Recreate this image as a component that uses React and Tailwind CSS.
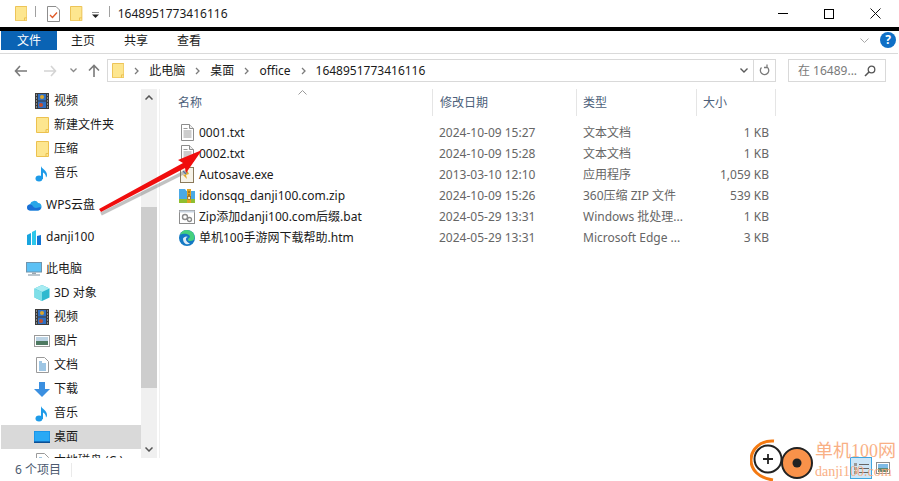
const F = '[font-family:"Noto_Sans","Noto_Sans_CJK_SC",sans-serif]';

function Folder({ s = 1 }) {
  return (
    <svg width={13 * s} height={16 * s} viewBox="0 0 13 16" className="shrink-0">
      <path d="M.5.5h12v15H.5z" fill="#fde68f" stroke="#ecc14f" />
      <path d="M10 15.5v-3h2.5" fill="none" stroke="#ecc14f" />
    </svg>
  );
}
function Film() {
  return (
    <svg width="14" height="16" viewBox="0 0 14 16" className="shrink-0">
      <rect width="14" height="16" fill="#3b3b3b" />
      <rect x="3" y="1" width="8" height="6.5" fill="#2f6fc2" />
      <rect x="3" y="8.5" width="8" height="6.5" fill="#2f6fc2" />
      <circle cx="7" cy="4" r="2" fill="#d9a62e" />
      <circle cx="6" cy="12" r="2" fill="#c44f2d" />
      <path d="M1 2h1M1 5h1M1 8h1M1 11h1M1 14h1M12 2h1M12 5h1M12 8h1M12 11h1M12 14h1" stroke="#ddd" />
    </svg>
  );
}
function Note() {
  return (
    <svg width="14" height="17" viewBox="0 0 14 17" className="shrink-0">
      <ellipse cx="4" cy="13.5" rx="3.5" ry="3" fill="#1e9be8" />
      <path d="M6 14V1c.5 3 6 4 6 9 0 1-.5 2-1 2.500 0-3-2-4.500-3-5V14z" fill="#1e9be8" />
    </svg>
  );
}
function Doc() {
  return (
    <svg width="15" height="17" viewBox="0 0 15 17" className="shrink-0">
      <path d="M1.500.5h8l4 4v12h-12z" fill="#fff" stroke="#8d8d8d" />
      <path d="M9.500.5v4h4" fill="#eee" stroke="#8d8d8d" />
      <path d="M3.500 4.500h4M3.500 7h8M3.500 9h8M3.500 11h8M3.500 13h8" stroke="#9a9a9a" />
    </svg>
  );
}
function Chevron() {
  return (
    <svg width="5" height="8" viewBox="0 0 5 8" className="shrink-0 mx-[10px]">
      <path d="M1 1l3 3-3 3" fill="none" stroke="#7b7b7b" strokeWidth="1.300" />
    </svg>
  );
}

const navIcons = {
  film: <Film />,
  folder: <Folder s={1} />,
  note: <Note />,
  cube: (
    <svg width="16" height="16" viewBox="0 0 16 16" className="shrink-0">
      <path d="M8 0l7.500 3.500v9L8 16 .5 12.500v-9z" fill="#2fb9cf" />
      <path d="M8 0l7.500 3.500L8 7 .5 3.500z" fill="#a8ecf2" />
      <path d="M8 7v9L.5 12.500v-9z" fill="#7fdfe8" />
    </svg>
  ),
  pic: (
    <svg width="16" height="13" viewBox="0 0 16 13" className="shrink-0">
      <rect x=".5" y=".5" width="15" height="11" fill="#fff" stroke="#9a9a9a" />
      <rect x="2" y="2" width="12" height="4" fill="#bcd3e4" />
      <rect x="2" y="6" width="12" height="4" fill="#4e7a62" />
    </svg>
  ),
  text: (
    <svg width="13" height="16" viewBox="0 0 13 16" className="shrink-0">
      <path d="M.5.500h8l4 4v11H.5z" fill="#fff" stroke="#9a9a9a" />
      <path d="M3 5h3M3 7h7M3 9h7M3 11h7M3 13h7" stroke="#3f8dc9" />
    </svg>
  ),
  down: (
    <svg width="16" height="15" viewBox="0 0 16 15" className="shrink-0">
      <path d="M5 0h6v7h5l-8 8-8-8h5z" fill="#3b8fe0" />
    </svg>
  ),
  desk: (
    <svg width="16" height="12" viewBox="0 0 16 12" className="shrink-0">
      <rect width="16" height="12" fill="#1790e6" />
      <rect x=".8" y=".8" width="14.400" height="9.500" fill="#29a9f5" />
      <rect x="0" y="10.500" width="16" height="1.500" fill="#0d4f93" />
    </svg>
  ),
  cloud: (
    <svg width="15" height="12" viewBox="0 0 15 12" className="shrink-0">
      <path d="M3.500 11.500a3.200 3.200 0 0 1-.5-6.300A4.500 4.500 0 0 1 11.200 4a3.800 3.800 0 0 1 .3 7.500z" fill="#29a6e8" />
      <path d="M3 11.500a3 3 0 0 1 0-6c3 0 3 3.500 6 3.500 2 0 4-1 5-.500-.5 2-1.500 3-3.500 3z" fill="#1a6fd6" />
    </svg>
  ),
  bars: (
    <svg width="14" height="15" viewBox="0 0 14 15" className="shrink-0">
      <path d="M0 5l4-2v12H0z" fill="#18a5df" />
      <path d="M5 15V2l4-2v15z" fill="#2dc7ea" />
      <path d="M10 15V6l4-1v10z" fill="#1075d6" />
    </svg>
  ),
  pc: (
    <svg width="16" height="14" viewBox="0 0 16 14" className="shrink-0">
      <rect x=".5" y=".5" width="15" height="9.500" fill="#5cc1f5" stroke="#6f94ad" />
      <path d="M6 10.500h4v1.500H6z" fill="#9aa7b0" />
      <path d="M2 13h12" stroke="#8ea0ad" strokeWidth="1.200" />
    </svg>
  ),
};

function NavRow({ icon, label, indent = "pl-[33px]", gap = "w-[20px]", selected, className = "" }) {
  return (
    <div className={`h-6 flex items-center shrink-0 ${indent} ${selected ? "bg-[#d9d9d9]" : ""} ${className}`}>
      <span className={`${gap} flex justify-center -ml-[2px] mr-[2px] shrink-0`}>{navIcons[icon]}</span>
      <span className="whitespace-nowrap text-[#1a1a1a]">{label}</span>
    </div>
  );
}

const fileIcons = [
  <Doc />,
  <Doc />,
  <svg width="16" height="16" viewBox="0 0 16 16">
    <rect x="1.500" y=".5" width="13" height="15" fill="#f7f3e8" stroke="#8a7a5c" />
    <path d="M8 3l2 4-3 1 1 4-4-4 3-1z" fill="#e0a92c" />
    <path d="M4 4l3 3" stroke="#4b7fc2" strokeWidth="1.300" />
  </svg>,
  <svg width="16" height="16" viewBox="0 0 16 16">
    <path d="M0 1h6l1.500 2H16v9H0z" fill="#4aa9e6" />
    <rect y="11" width="16" height="4" fill="#8fbf30" />
    <rect x="8" y="1" width="4" height="14" fill="#e0a322" />
    <path d="M10 3v2M10 6v2" stroke="#7a4c10" />
    <rect x="8.800" y="8.500" width="2.500" height="3" fill="#fff2c0" stroke="#7a4c10" strokeWidth=".6" />
  </svg>,
  <svg width="16" height="14" viewBox="0 0 16 14">
    <rect x=".5" y=".5" width="15" height="13" fill="#fff" stroke="#8d8d8d" />
    <rect x=".5" y=".5" width="15" height="2" fill="#c9d4e0" />
    <circle cx="6" cy="7" r="2.500" fill="none" stroke="#8a8a8a" strokeWidth="1.400" />
    <circle cx="10.500" cy="9.500" r="2" fill="none" stroke="#8a8a8a" strokeWidth="1.300" />
  </svg>,
  <svg width="16" height="16" viewBox="0 0 16 16">
    <circle cx="8" cy="8" r="8" fill="#1479c4" />
    <path d="M1 5a7.500 7.500 0 0 1 14.500 2c.5 3-2 4-4 4-1.500 0-2.500-.5-2.500-1.500C9 8 12 8 10.500 5.500 8.500 3 3 3.500 1 5z" fill="#45d07d" />
    <path d="M4 8.500a3.500 3.500 0 0 1 5-1.500c-3 0-3 5 2 6.500-3 2-7 0-7-5z" fill="#fff" fillOpacity=".85" />
  </svg>,
];

const files = [
  ["0001.txt", "2024-10-09 15:27", "文本文档", "1 KB"],
  ["0002.txt", "2024-10-09 15:28", "文本文档", "1 KB"],
  ["Autosave.exe", "2013-03-10 12:10", "应用程序", "1,059 KB"],
  ["idonsqq_danji100.com.zip", "2024-10-09 15:26", "360压缩 ZIP 文件", "539 KB"],
  ["Zip添加danji100.com后缀.bat", "2024-05-29 13:31", "Windows 批处理...", "1 KB"],
  ["单机100手游网下载帮助.htm", "2024-05-29 13:31", "Microsoft Edge ...", "3 KB"],
];

export default function App() {
  return (
    <div className={`relative w-[899px] h-[481px] overflow-hidden bg-white text-[12px] leading-none flex flex-col ${F}`}>
      {/* Title bar */}
      <div className="h-[27px] flex items-center shrink-0 pl-[15px]">
        <Folder s={0.95} />
        <div className="w-px h-[11px] bg-[#a0a0a0] ml-[8px] mb-[4px]" />
        <svg width="13" height="16" viewBox="0 0 13 16" className="ml-[11px]">
          <path d="M.5.5h8.500l3.500 3.500v11.500H.5z" fill="#fff" stroke="#8d8d8d" />
          <path d="M3 9l2.500 2.500L10 6.500" fill="none" stroke="#e05a28" strokeWidth="1.300" />
        </svg>
        <div className="ml-[10px]"><Folder s={0.95} /></div>
        <svg width="7" height="6" viewBox="0 0 7 6" className="ml-[9px] mt-[2px]">
          <path d="M0 0h7" stroke="#222" />
          <path d="M0 2.500h7L3.500 6z" fill="#222" />
        </svg>
        <div className="w-px h-[11px] bg-[#a0a0a0] ml-[10px] mb-[4px]" />
        <span className="ml-[8px] text-[12px] text-[#1a1a1a]">1648951773416116</span>
        <div className="ml-auto flex items-center">
          <div className="w-[46px] flex justify-center"><div className="w-[10px] h-px bg-black" /></div>
          <div className="w-[46px] flex justify-center"><div className="w-[10px] h-[10px] border border-black" /></div>
          <div className="w-[46px] flex justify-center mr-[1px]">
            <svg width="11" height="11" viewBox="0 0 11 11"><path d="M.5.500l10 10M10.500.500l-10 10" stroke="#111" /></svg>
          </div>
        </div>
      </div>
      <div className="h-1 bg-black shrink-0" />
      {/* Ribbon */}
      <div className="h-[22px] flex shrink-0 pl-px border-b-0">
        <div className="w-[56px] h-[19px] bg-[#0a63b4] text-white flex items-center justify-center">文件</div>
        <div className="w-[52px] h-[19px] flex items-center justify-center text-[#1a1a1a]">主页</div>
        <div className="w-[54px] h-[19px] flex items-center justify-center text-[#1a1a1a]">共享</div>
        <div className="w-[52px] h-[19px] flex items-center justify-center text-[#1a1a1a]">查看</div>
        <div className="ml-auto flex items-start pr-[3px] pt-[1px] gap-[11px]">
          <svg width="9" height="6" viewBox="0 0 9 6" className="mt-[6px]"><path d="M.5.500l4 4 4-4" fill="none" stroke="#a8a8a8" /></svg>
          <div className="w-4 h-4 rounded-full bg-[#0f6fc6] text-white font-bold text-[12px] flex items-center justify-center">?</div>
        </div>
      </div>
      <div className="h-px bg-[#dadada] shrink-0 mr-[1px]" />
      {/* Address row */}
      <div className="h-[35px] flex items-start shrink-0 pt-[5px]">
        <div className="flex items-center h-[23px] pl-[14px] w-[107px] shrink-0">
          <svg width="13" height="12" viewBox="0 0 13 12"><path d="M6 1L1.500 6 6 11M1.500 6H13" fill="none" stroke="#7a7a7a" strokeWidth="1.600" /></svg>
          <svg width="13" height="12" viewBox="0 0 13 12" className="ml-[17px]"><path d="M7 1l4.500 5L7 11M11.500 6H0" fill="none" stroke="#d4d4d4" strokeWidth="1.600" /></svg>
          <svg width="7" height="5" viewBox="0 0 7 5" className="ml-[13px]"><path d="M.5.500L3.500 3.500 6.500.5" fill="none" stroke="#8a8a8a" strokeWidth="1.300" /></svg>
          <svg width="12" height="13" viewBox="0 0 12 13" className="ml-[11px]"><path d="M1 6.500L6 1.500l5 5M6 1.500V13" fill="none" stroke="#7a7a7a" strokeWidth="1.600" /></svg>
        </div>
        <div className="w-[669px] h-[23px] border border-[#d9d9d9] flex items-center pl-[4px] shrink-0">
          <Folder s={0.95} />
          <Chevron /><span className="text-[#1a1a1a]">此电脑</span>
          <Chevron /><span className="text-[#1a1a1a]">桌面</span>
          <Chevron /><span className="text-[#1a1a1a]">office</span>
          <Chevron /><span className="text-[#1a1a1a]">1648951773416116</span>
          <div className="ml-auto flex items-center h-full">
            <svg width="8" height="5" viewBox="0 0 8 5" className="mr-[5px]"><path d="M.5.500l3.500 3.500L7.500.5" fill="none" stroke="#5a5a5a" strokeWidth="1.400" /></svg>
            <div className="w-px h-full bg-[#d9d9d9]" />
            <svg width="11" height="13" viewBox="0 0 11 13" className="mx-[5px]"><path d="M2.500 3.500a4.200 4.200 0 1 0 5.500-.5M8 .5v3H5" fill="none" stroke="#7a7a7a" strokeWidth="1.300" /></svg>
          </div>
        </div>
        <div className="ml-[12px] w-[98px] h-[23px] border border-[#d9d9d9] flex items-center pl-[9px] text-[#7a7a7a] shrink-0">
          <span>在 16489...</span>
          <svg width="12" height="12" viewBox="0 0 12 12" className="ml-auto mr-[9px]"><circle cx="7.500" cy="4.500" r="3.300" fill="none" stroke="#555" strokeWidth="1.300" /><path d="M5 7l-4 4" stroke="#555" strokeWidth="1.600" /></svg>
        </div>
      </div>
      {/* Body */}
      <div className="flex flex-1 min-h-0">
        <div className="w-[141px] pl-px overflow-hidden shrink-0 pt-0 flex flex-col h-[369px]">
          <NavRow icon="film" label="视频" />
          <NavRow icon="folder" label="新建文件夹" />
          <NavRow icon="folder" label="压缩" />
          <NavRow icon="note" label="音乐" />
          <NavRow icon="cloud" label="WPS云盘" indent="pl-[25px]" className="mt-2" />
          <NavRow icon="bars" label="danji100" indent="pl-[25px]" className="mt-2" />
          <NavRow icon="pc" label="此电脑" indent="pl-[25px]" className="mt-2" />
          <NavRow icon="cube" label="3D 对象" />
          <NavRow icon="film" label="视频" />
          <NavRow icon="pic" label="图片" />
          <NavRow icon="text" label="文档" />
          <NavRow icon="down" label="下载" />
          <NavRow icon="note" label="音乐" />
          <NavRow icon="desk" label="桌面" selected />
          <NavRow icon="text" label="本地磁盘 (C:)" />
        </div>
        {/* Scrollbar */}
        <div className="w-[16px] h-[369px] bg-[#f0f0f0] flex flex-col shrink-0 ml-[0px]">
          <div className="h-[17px] flex items-center justify-center shrink-0">
            <svg width="8" height="5" viewBox="0 0 8 5"><path d="M.5 4.500L4 1l3.500 3.500" fill="none" stroke="#555" strokeWidth="1.500" /></svg>
          </div>
          <div className="h-[101px] shrink-0" />
          <div className="h-[181px] bg-[#cdcdcd] shrink-0" />
          <div className="flex-1" />
          <div className="h-[17px] flex items-center justify-center shrink-0">
            <svg width="8" height="5" viewBox="0 0 8 5"><path d="M.5.500L4 4l3.500-3.500" fill="none" stroke="#555" strokeWidth="1.500" /></svg>
          </div>
        </div>
        <div className="w-px h-[369px] bg-[#f0f0f0] ml-[2px] shrink-0" />
        {/* Files */}
        <div className="flex-1 min-w-0 pl-[11px] flex flex-col relative">
          <div className="h-[27px] flex items-center text-[#4c607a] shrink-0">
            <div className="w-[261px] pl-[7px] h-full flex items-center">名称</div>
            <div className="w-[144px] pl-[7px] h-full flex items-center border-l border-[#e5e5e5]">修改日期</div>
            <div className="w-[120px] pl-[6px] h-full flex items-center border-l border-[#e5e5e5]">类型</div>
            <div className="w-[80px] pl-[6px] h-full flex items-center border-x border-[#e5e5e5]">大小</div>
          </div>
          <svg width="9" height="5" viewBox="0 0 9 5" className="absolute left-[138px] top-[1px]"><path d="M.5 4.500l4-4 4 4" fill="none" stroke="#9a9a9a" /></svg>
          <div className="pt-[6px]">
            {files.map((f, i) => (
              <div key={f[0]} className="h-[21px] flex items-center">
                <div className="w-[261px] pl-[8px] flex items-center">
                  <span className="w-[16px] flex justify-center shrink-0">{fileIcons[i]}</span>
                  <span className="ml-[4px] text-[#1a1a1a] whitespace-nowrap">{f[0]}</span>
                </div>
                <div className="w-[144px] pl-[7px] text-[#666] whitespace-nowrap">{f[1]}</div>
                <div className="w-[120px] pl-[7px] text-[#666] whitespace-nowrap">{f[2]}</div>
                <div className="w-[73px] text-right text-[#666] whitespace-nowrap">{f[3]}</div>
              </div>
            ))}
          </div>
        </div>
      </div>
      {/* Status */}
      <div className="absolute left-0 right-0 top-[458px] h-[23px] bg-white flex items-center pl-[15px] text-[#4c5a70]">
        <span>6 个项目</span>
        <div className="ml-[10px] w-px h-[14px] bg-[#eaeaea]" />
      </div>
      {/* View buttons */}
      <div className="absolute left-[850px] top-[457px] w-[22px] h-[22px] bg-[#cde6f7] border border-[#3fa6e0] flex items-center justify-center">
        <svg width="16" height="11" viewBox="0 0 16 11"><path d="M6 1.500h10M6 5.500h10M6 9.500h10" stroke="#666" /><rect x="1" y="0" width="3" height="3" fill="#999" /><rect x="1" y="4" width="3" height="3" fill="#999" /><rect x="1" y="8" width="3" height="3" fill="#999" /></svg>
      </div>
      <div className="absolute left-[876px] top-[462px]">
        <svg width="14" height="12" viewBox="0 0 14 12"><rect x=".5" y=".5" width="13" height="11" fill="#fff" stroke="#8d8d8d" /><rect x="2" y="2" width="10" height="4" fill="#7fbbe6" /><rect x="2" y="6" width="10" height="4" fill="#5a8a78" /></svg>
      </div>
      {/* Watermark */}
      <div className="absolute left-[750px] top-[438px] pointer-events-none">
        <svg width="66" height="43" viewBox="0 0 66 43">
          <path d="M24 3C10 2 1 12 1 22c0 10 8 18 22 20" fill="none" stroke="#f47a12" strokeWidth="3" />
          <circle cx="18" cy="21" r="13.500" fill="#fff" stroke="#222" strokeWidth="2" />
          <path d="M18 16v10M13 21h10" stroke="#222" strokeWidth="1.800" />
          <circle cx="47" cy="25" r="15" fill="#f9924a" stroke="#222" strokeWidth="2" />
          <circle cx="47" cy="25" r="4.500" fill="#222" />
        </svg>
      </div>
      <div className="absolute left-[815px] top-[441px] pointer-events-none text-[#f9a878] [font-family:'Liberation_Serif','Noto_Sans_CJK_SC',serif]">
        <div className="text-[18px] leading-[21px] opacity-90 whitespace-nowrap">单机100网</div>
        <div className="text-[14px] leading-[19px] opacity-90 whitespace-nowrap">danji100.com</div>
      </div>
      {/* Red arrow annotation */}
      <svg className="absolute left-[95px] top-[145px] pointer-events-none" width="130" height="75" viewBox="0 0 130 75">
        <path d="M6 69L92 26" stroke="#666" strokeOpacity=".4" strokeWidth="3.500" />
        <path d="M4 64L88 18 83 15 107 5 91 28 90 23 6 67z" fill="#f00d0d" />
      </svg>
    </div>
  );
}
